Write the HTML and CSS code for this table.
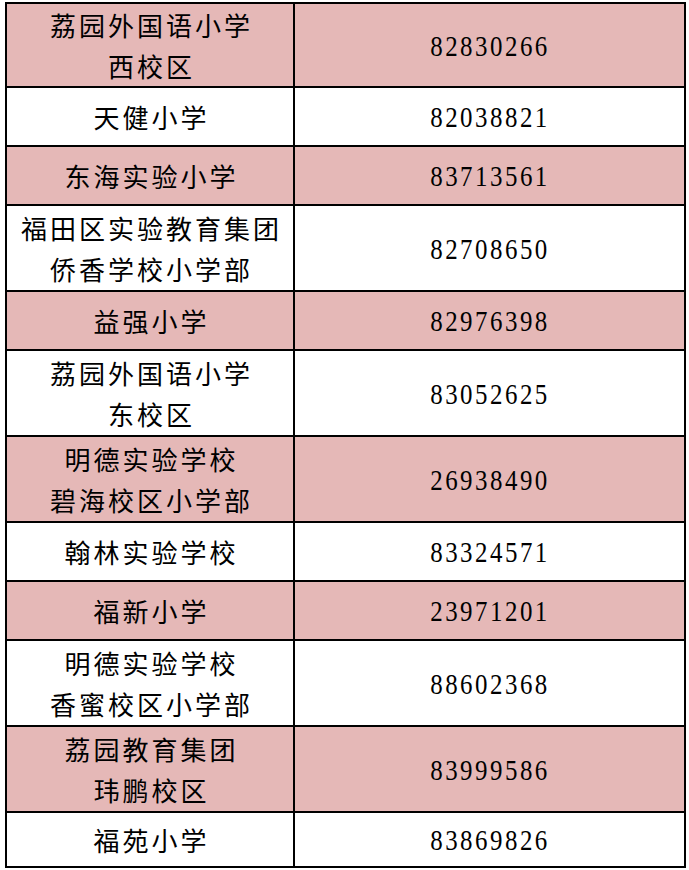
FILE: index.html
```html
<!DOCTYPE html>
<html lang="zh-CN">
<head>
<meta charset="utf-8">
<title>学校电话</title>
<link rel="stylesheet" href="styles.css">
</head>
<body>
<table class="list">
  <tr class="pink dbl first"><td class="name">荔园外国语小学<br>西校区</td><td class="tel"><span class="num">82830266</span></td></tr>
  <tr class="sgl"><td class="name">天健小学</td><td class="tel"><span class="num">82038821</span></td></tr>
  <tr class="pink sgl"><td class="name">东海实验小学</td><td class="tel"><span class="num">83713561</span></td></tr>
  <tr class="dbl"><td class="name">福田区实验教育集团<br>侨香学校小学部</td><td class="tel"><span class="num">82708650</span></td></tr>
  <tr class="pink sgl"><td class="name">益强小学</td><td class="tel"><span class="num">82976398</span></td></tr>
  <tr class="dbl"><td class="name">荔园外国语小学<br>东校区</td><td class="tel"><span class="num">83052625</span></td></tr>
  <tr class="pink dbl"><td class="name">明德实验学校<br>碧海校区小学部</td><td class="tel"><span class="num">26938490</span></td></tr>
  <tr class="sgl"><td class="name">翰林实验学校</td><td class="tel"><span class="num">83324571</span></td></tr>
  <tr class="pink sgl"><td class="name">福新小学</td><td class="tel"><span class="num">23971201</span></td></tr>
  <tr class="dbl"><td class="name">明德实验学校<br>香蜜校区小学部</td><td class="tel"><span class="num">88602368</span></td></tr>
  <tr class="pink dbl"><td class="name">荔园教育集团<br>玮鹏校区</td><td class="tel"><span class="num">83999586</span></td></tr>
  <tr class="last"><td class="name">福苑小学</td><td class="tel"><span class="num">83869826</span></td></tr>
</table>
</body>
</html>
```
FILE: styles.css
```css
html, body {
  margin: 0;
  padding: 0;
  background: #ffffff;
}
body {
  padding: 2px 0 0 5px;
}
.list {
  border-collapse: collapse;
  table-layout: fixed;
  width: 681px;
  color: #000;
}
.list td {
  border: 2px solid #000;
  padding: 0;
  text-align: center;
  vertical-align: middle;
}
.list td.name {
  width: 283px;
  font-family: "Noto Sans CJK SC", "Noto Sans", sans-serif;
  font-size: 26px;
  line-height: 41px;
  letter-spacing: 3px;
  padding-left: 3px;
}
.list td.tel {
  font-family: "Liberation Serif", "Times New Roman", serif;
  font-size: 30px;
  line-height: 41px;
}
.num {
  display: inline-block;
  letter-spacing: 3px;
  transform: scaleX(0.83);
  transform-origin: center;
}
.pink td {
  background: #e5b8b7;
}
.sgl td {
  height: 57px;
}
.dbl td {
  height: 84px;
}
.first td {
  height: 82px;
}
.last td {
  height: 53px;
}
```
